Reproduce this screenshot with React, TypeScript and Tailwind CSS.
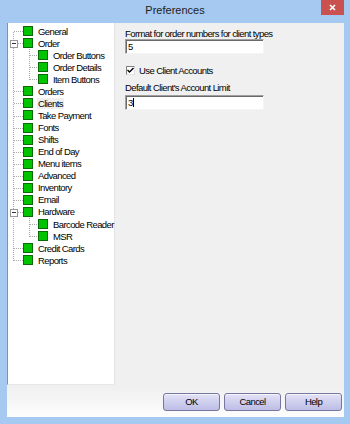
import React from "react";

type Item = { label: string; level: 0 | 1; expanded?: boolean; selected?: boolean };

const ITEMS: Item[] = [
  { label: "General", level: 0 },
  { label: "Order", level: 0, expanded: true },
  { label: "Order Buttons", level: 1 },
  { label: "Order Details", level: 1 },
  { label: "Item Buttons", level: 1 },
  { label: "Orders", level: 0 },
  { label: "Clients", level: 0, selected: true },
  { label: "Take Payment", level: 0 },
  { label: "Fonts", level: 0 },
  { label: "Shifts", level: 0 },
  { label: "End of Day", level: 0 },
  { label: "Menu items", level: 0 },
  { label: "Advanced", level: 0 },
  { label: "Inventory", level: 0 },
  { label: "Email", level: 0 },
  { label: "Hardware", level: 0, expanded: true },
  { label: "Barcode Reader", level: 1 },
  { label: "MSR", level: 1 },
  { label: "Credit Cards", level: 0 },
  { label: "Reports", level: 0 },
];

const ROW_H = 12.07;
const TOP = 2;

const cy = (i: number) => Math.round(TOP + i * ROW_H + ROW_H / 2) + 0.5;

function TreeLines() {
  const lastTop = ITEMS.length - 1;
  const segs: React.ReactNode[] = [];
  const boxes: React.ReactNode[] = [];

  ITEMS.forEach((it, i) => {
    const y = cy(i);
    if (it.level === 0) {
      segs.push(<line key={`h${i}`} x1={5.5} y1={y} x2={15} y2={y} />);
      if (it.expanded) {
        let last = i;
        while (ITEMS[last + 1]?.level === 1) last++;
        segs.push(<line key={`v${i}`} x1={21.5} y1={y + 5} x2={21.5} y2={cy(last)} />);
        boxes.push(
          <g key={`b${i}`}>
            <rect x={2.5} y={y - 3.5} width={7} height={7} fill="#fff" stroke="#989898" />
            <line x1={4} y1={y} x2={8} y2={y} stroke="#333" />
          </g>
        );
      }
    } else {
      segs.push(<line key={`h${i}`} x1={21.5} y1={y} x2={30} y2={y} />);
    }
  });

  return (
    <svg className="absolute inset-0 pointer-events-none" width="106" height="362">
      <g stroke="#a8a8a8" strokeDasharray="1 1" shapeRendering="crispEdges">
        <line x1={5.5} y1={cy(0)} x2={5.5} y2={cy(lastTop)} />
        {segs}
      </g>
      <g shapeRendering="crispEdges">{boxes}</g>
    </svg>
  );
}

function Edit({ value, caret }: { value: string; caret?: boolean }) {
  return (
    <div className="w-[139px] h-[15px] bg-white border border-t-[#a0a0a0] border-l-[#a0a0a0] border-r-[#f4f4f4] border-b-[#f4f4f4] shadow-[inset_1px_1px_0_#696969] flex items-center pl-[2px] leading-none">
      <span>{value}</span>
      {caret && <span className="w-px h-[9px] bg-black" />}
    </div>
  );
}

function DlgButton({ label }: { label: string }) {
  return (
    <button className="w-[57px] h-[18px] rounded-[3px] border border-[#76769e] bg-linear-to-b from-[#e2e2f6] to-[#bdbde6] text-black leading-none shadow-[inset_0_1px_0_#f4f4fc]">
      {label}
    </button>
  );
}

export default function App() {
  return (
    <div className="w-[350px] h-[424px] bg-[#a6c9f2] flex flex-col text-[9.5px] tracking-[-0.6px] text-black overflow-hidden font-['Liberation_Sans',Arial,sans-serif]">
      {/* Title bar */}
      <div className="h-[23px] flex items-start pl-[29px] pr-[6px]">
        <div className="flex-1 text-center pt-[5px] text-[11px] tracking-normal leading-none text-[#222]">
          Preferences
        </div>
        <div className="w-[23px] h-[15px] bg-[#c9514f] flex items-center justify-center">
          <svg width="7" height="7" viewBox="0 0 7 7">
            <path d="M1 1 L6 6 M6 1 L1 6" stroke="#fff" strokeWidth="1.6" />
          </svg>
        </div>
      </div>

      {/* Client area */}
      <div className="flex-1 ml-[7px] mr-[6px] mb-[7px] bg-[#f0f0f0] flex flex-col">
        <div className="flex h-[362px]">
          {/* Tree */}
          <div className="relative w-[108px] bg-white border-l border-l-[#8e8e8e] border-r border-r-[#e4e4e4] border-b border-b-[#e8e8e8] pt-[2px]">
            <TreeLines />
            {ITEMS.map((it) => (
              <div
                key={it.label}
                className={`relative h-[12.07px] flex items-center ${it.level === 0 ? "pl-[15px]" : "pl-[30px]"}`}
              >
                <div className="w-[10px] h-[10px] bg-[#00c400] border border-[#0a6a0a] shrink-0" />
                <span className={`ml-[4px] px-[1px] leading-[11px] whitespace-nowrap ${it.selected ? "bg-[#efefef]" : ""}`}>
                  {it.label}
                </span>
              </div>
            ))}
          </div>

          {/* Settings */}
          <div className="flex-1 pl-[10px] pt-[6px] flex flex-col">
            <div className="leading-[10px]">Format for order numbers for client types</div>
            <Edit value="5" />
            <div className="mt-[11px] flex items-center pl-[1px] h-[11px]">
              <div className="w-[9px] h-[9px] bg-white border border-t-[#808080] border-l-[#808080] border-r-[#e0e0e0] border-b-[#e0e0e0] flex items-center justify-center">
                <svg width="7" height="7" viewBox="0 0 7 7">
                  <path d="M0.5 3 L2.5 5 L6.5 1" stroke="#000" strokeWidth="1.4" fill="none" />
                </svg>
              </div>
              <span className="ml-[4px] leading-[11px]">Use Client Accounts</span>
            </div>
            <div className="mt-[7px] leading-[10px]">Default Client's Account Limit</div>
            <div className="mt-[2px]">
              <Edit value="3" caret />
            </div>
          </div>
        </div>

        {/* Button strip */}
        <div className="flex-1 bg-linear-to-b from-[#efefef] to-[#fdfdfd] flex items-start justify-end pt-[8px] pr-[2px] gap-[4px]">
          <DlgButton label="OK" />
          <DlgButton label="Cancel" />
          <DlgButton label="Help" />
        </div>
      </div>
    </div>
  );
}
